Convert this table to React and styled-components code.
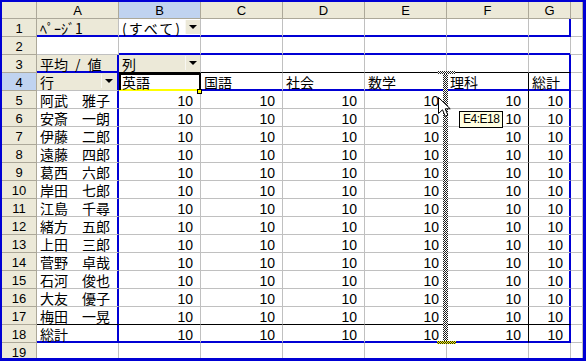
import React from 'react'
import styled, { createGlobalStyle } from 'styled-components'

const BLUE = '#0000d4'

const GlobalStyle = createGlobalStyle`
  html, body { margin: 0; padding: 0; background: #fff; }
  body { font-family: "Liberation Sans", "Noto Sans CJK JP", sans-serif; }
`

const lineColor = v => {
  if (v === 'blue') return BLUE
  if (v === 'black') return '#000'
  if (v === 'yellow') return '#ffff00'
  return '#c0c0c0'
}

const shadows = p => {
  const s = []
  if (p.$b === 'blue') s.push(`inset 0 -1px 0 ${BLUE}`)
  if (p.$r === 'blue') s.push(`inset -1px 0 0 ${BLUE}`)
  if (p.$active) s.push('inset 2px 2px 0 #000', 'inset -1px 0 0 #000', 'inset 0 -1px 0 #ffff00')
  return s.length ? s.join(', ') : 'none'
}

const Frame = styled.div`
  position: relative;
  width: 586px;
  height: 361px;
  box-sizing: border-box;
  border-style: solid;
  border-color: ${BLUE};
  border-width: 2px 3px 3px 2px;
  overflow: hidden;
`

const Sheet = styled.div`
  display: grid;
  grid-template-columns: 35px repeat(6, 82px) 42px 1fr;
  grid-template-rows: 17px repeat(19, 18px);
`

const Head = styled.div`
  box-sizing: border-box;
  background: ${p => (p.$sel ? '#c0d3f0' : '#ece9d8')};
  border-right: 1px solid #aca899;
  border-bottom: 1px solid #aca899;
  font: 13px "Liberation Sans", sans-serif;
  color: #000;
  display: flex;
  align-items: center;
  justify-content: center;
  padding-top: 1px;
`

const Cell = styled.div`
  position: relative;
  box-sizing: border-box;
  border-right: 1px solid ${p => lineColor(p.$r)};
  border-bottom: 1px solid ${p => lineColor(p.$b)};
  background: ${p => (p.$field ? '#ece9d8' : '#fff')};
  box-shadow: ${p => shadows(p)};
  padding: ${p => (p.$num ? '3px 7px 0 0' : '1px 3px 0 3px')};
  text-align: ${p => (p.$num ? 'right' : 'left')};
  font-family: ${p => (p.$num ? '"Liberation Sans", "Noto Sans CJK JP"' : '"Noto Sans CJK JP"')}, sans-serif;
  font-size: 14px;
  line-height: ${p => (p.$num ? '14px' : '16px')};
  color: #000;
  white-space: nowrap;
  overflow: hidden;
`

const Spaced = styled.span`
  letter-spacing: 2px;
`

const DropBtn = styled.span`
  position: absolute;
  top: 1px;
  right: ${p => (p.$inset ? '2px' : '0')};
  width: 15px;
  height: 14px;
  box-sizing: border-box;
  background: #ece9d8;
  border-left: 1px solid #f8f7f2;
  display: flex;
  align-items: center;
  justify-content: center;

  &::after {
    content: '';
    border-left: 4px solid transparent;
    border-right: 4px solid transparent;
    border-top: 4px solid #000;
  }
`

const Checker = styled.div`
  position: absolute;
  left: ${p => p.$x}px;
  top: ${p => p.$y}px;
  width: ${p => p.$w}px;
  height: ${p => p.$h}px;
  background: repeating-conic-gradient(#202020 0 25%, ${p => (p.$yellow ? '#ffff00' : '#ffffff')} 0 50%) 0 0 / 2px 2px;
`

const FillHandle = styled.div`
  position: absolute;
  left: 195px;
  top: 87px;
  width: 5px;
  height: 5px;
  box-sizing: border-box;
  border: 1px solid #000;
  background: #ffff00;
`

const Tip = styled.div`
  position: absolute;
  left: 457px;
  top: 109px;
  height: 17px;
  box-sizing: border-box;
  padding: 0 3px;
  background: #ffffe1;
  border: 1px solid #000;
  font: 12px/15px "Liberation Sans", sans-serif;
  letter-spacing: -0.5px;
  color: #000;
`

const Cursor = styled.svg`
  position: absolute;
  left: 436px;
  top: 95px;
`

const letters = ['A', 'B', 'C', 'D', 'E', 'F', 'G', '']
const subjects = ['英語', '国語', '社会', '数学', '理科', '総計']
const names = [
  '阿武　雅子', '安斎　一朗', '伊藤　二郎', '遠藤　四郎', '葛西　六郎',
  '岸田　七郎', '江島　千尋', '緒方　五郎', '上田　三郎', '菅野　卓哉',
  '石河　俊也', '大友　優子', '梅田　一晃',
]
const rows = Array.from({ length: 19 }, (_, i) => i + 1)

function lines(r, c) {
  const p = {}
  if (r === 1 && c <= 6) p.$b = 'blue'
  if (r === 2 && c >= 1 && c <= 6) p.$b = 'blue'
  if (r === 3 && c === 0) p.$b = 'blue'
  if (r === 3 && c >= 1 && c <= 6) p.$b = 'black'
  if (r === 4 && c >= 2 && c <= 6) p.$b = 'blue'
  if (r === 17 && c <= 6) p.$b = 'black'
  if (r === 18 && c <= 6) p.$b = 'blue'
  if (c === 0 && r >= 3 && r <= 18) p.$r = 'blue'
  if (c === 5 && r >= 4 && r <= 18) p.$r = 'black'
  if (c === 6 && (r === 1 || (r >= 3 && r <= 18))) p.$r = 'blue'
  if (r === 4 && c === 1) {
    p.$b = 'yellow'
    p.$r = 'black'
    p.$active = true
  }
  return p
}

function content(r, c) {
  if (r === 1 && c === 0) return { text: 'ﾍﾟｰｼﾞ1', field: true }
  if (r === 1 && c === 1) return { text: <Spaced>(すべて)</Spaced>, btn: true }
  if (r === 3 && c === 0) return { text: '平均\u2002/\u2002値', field: true }
  if (r === 3 && c === 1) return { text: '列', field: true, btn: true }
  if (r === 4 && c === 0) return { text: '行', field: true, btn: true, inset: true }
  if (r === 4 && c >= 1 && c <= 6) return { text: subjects[c - 1] }
  if (r >= 5 && r <= 17 && c === 0) return { text: names[r - 5] }
  if (r === 18 && c === 0) return { text: '総計' }
  if (r >= 5 && r <= 18 && c >= 1 && c <= 6) return { text: '10', num: true }
  return {}
}

export default function App() {
  return (
    <>
      <GlobalStyle />
      <Frame>
        <Sheet>
          <Head />
          {letters.map((l, i) => (
            <Head key={i} $sel={l === 'B'}>{l}</Head>
          ))}
          {rows.map(r => (
            <React.Fragment key={r}>
              <Head $sel={r === 4}>{r}</Head>
              {letters.map((_, c) => {
                const k = content(r, c)
                return (
                  <Cell key={c} {...lines(r, c)} $field={k.field} $num={k.num}>
                    {k.text}
                    {k.btn && <DropBtn $inset={k.inset} />}
                  </Cell>
                )
              })}
            </React.Fragment>
          ))}
        </Sheet>

        <FillHandle />
        <Checker $x={441} $y={70} $w={5} $h={271} />
        <Checker $x={435} $y={69} $w={18} $h={3} />
        <Checker $x={435} $y={339} $w={19} $h={3} $yellow />

        <Cursor width="13" height="21" viewBox="0 0 13 21">
          <path d="M0.5 0.5 L0.5 16.5 L4.5 12.8 L7.2 19.2 L9.8 18.1 L7.2 11.8 L12.2 11.8 Z" fill="#fff" stroke="#000" strokeWidth="1" />
        </Cursor>
        <Tip>E4:E18</Tip>
      </Frame>
    </>
  )
}
